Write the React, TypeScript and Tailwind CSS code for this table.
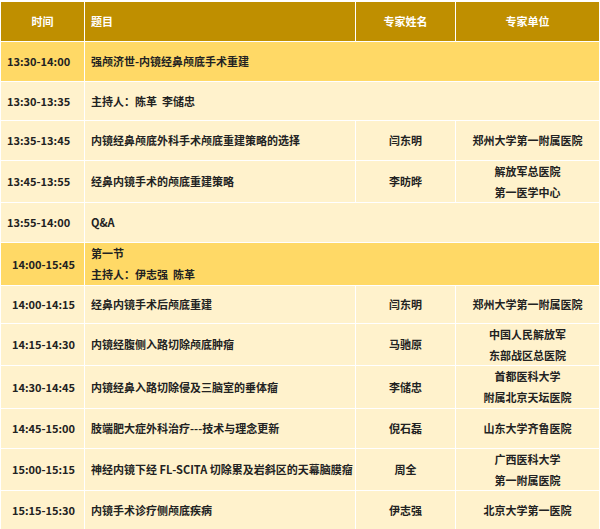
import React from "react";

type Row = {
  h: string;
  kind: "light" | "hl";
  time: string;
  timeAlign: "left" | "center";
  title: React.ReactNode;
  span?: boolean;
  name?: string;
  unit?: string[];
};

const rows: Row[] = [
  { h: "h-[39px]", kind: "hl", time: "13:30-14:00", timeAlign: "left", title: "强颅济世-内镜经鼻颅底手术重建", span: true },
  { h: "h-[38px]", kind: "light", time: "13:30-13:35", timeAlign: "left", title: "主持人：陈革  李储忠", span: true },
  { h: "h-[39px]", kind: "light", time: "13:35-13:45", timeAlign: "left", title: "内镜经鼻颅底外科手术颅底重建策略的选择", name: "闫东明", unit: ["郑州大学第一附属医院"] },
  { h: "h-[41px]", kind: "light", time: "13:45-13:55", timeAlign: "left", title: "经鼻内镜手术的颅底重建策略", name: "李昉晔", unit: ["解放军总医院", "第一医学中心"] },
  { h: "h-[39px]", kind: "light", time: "13:55-14:00", timeAlign: "left", title: "Q&A", span: true },
  {
    h: "h-[42px]",
    kind: "hl",
    time: "14:00-15:45",
    timeAlign: "center",
    title: (
      <div className="leading-[21px]">
        <div>第一节</div>
        <div className="whitespace-pre">主持人：伊志强  陈革</div>
      </div>
    ),
    span: true,
  },
  { h: "h-[37px]", kind: "light", time: "14:00-14:15", timeAlign: "center", title: "经鼻内镜手术后颅底重建", name: "闫东明", unit: ["郑州大学第一附属医院"] },
  { h: "h-[41px]", kind: "light", time: "14:15-14:30", timeAlign: "center", title: "内镜经腹侧入路切除颅底肿瘤", name: "马驰原", unit: ["中国人民解放军", "东部战区总医院"] },
  { h: "h-[42px]", kind: "light", time: "14:30-14:45", timeAlign: "center", title: "内镜经鼻入路切除侵及三脑室的垂体瘤", name: "李储忠", unit: ["首都医科大学", "附属北京天坛医院"] },
  { h: "h-[39px]", kind: "light", time: "14:45-15:00", timeAlign: "center", title: "肢端肥大症外科治疗---技术与理念更新", name: "倪石磊", unit: ["山东大学齐鲁医院"] },
  { h: "h-[41px]", kind: "light", time: "15:00-15:15", timeAlign: "center", title: "神经内镜下经 FL-SCITA 切除累及岩斜区的天幕脑膜瘤", name: "周全", unit: ["广西医科大学", "第一附属医院"] },
  { h: "h-[39px]", kind: "light", time: "15:15-15:30", timeAlign: "center", title: "内镜手术诊疗侧颅底疾病", name: "伊志强", unit: ["北京大学第一医院"] },
];

export default function App() {
  return (
    <div
      className="w-[600px] h-[529px] overflow-hidden bg-white pt-[2px] pl-px text-[11px] font-bold text-[#222222]"
      style={{ fontFamily: '"Noto Sans CJK SC", "Noto Sans", sans-serif' }}
    >
      <div className="w-[598px] flex flex-col gap-px">
        {/* header */}
        <div className="flex gap-px h-[39px] text-white">
          <div className="w-[83px] shrink-0 bg-[#BF8F00] flex items-center justify-center">时间</div>
          <div className="w-[270px] shrink-0 bg-[#BF8F00] flex items-center pl-[6px]">题目</div>
          <div className="w-[99px] shrink-0 bg-[#BF8F00] flex items-center justify-center">专家姓名</div>
          <div className="flex-1 bg-[#BF8F00] flex items-center justify-center">专家单位</div>
        </div>
        {rows.map((r, i) => {
          const bg = r.kind === "hl" ? "bg-[#FFD966]" : "bg-[#FFF2CC]";
          return (
            <div key={i} className={`flex gap-px ${r.h}`}>
              <div
                className={`w-[83px] shrink-0 ${bg} flex items-center ${
                  r.timeAlign === "left" ? "pl-[6px]" : "justify-center pl-[2px]"
                }`}
              >
                {r.time}
              </div>
              {r.span ? (
                <div className={`flex-1 ${bg} flex items-center pl-[6px] whitespace-pre`}>{r.title}</div>
              ) : (
                <>
                  <div className={`w-[270px] shrink-0 ${bg} flex items-center pl-[6px] whitespace-nowrap`}>
                    {r.title}
                  </div>
                  <div className={`w-[99px] shrink-0 ${bg} flex items-center justify-center`}>{r.name}</div>
                  <div className={`flex-1 ${bg} flex flex-col items-center justify-center leading-[21px]`}>
                    {r.unit?.map((u, j) => (
                      <div key={j}>{u}</div>
                    ))}
                  </div>
                </>
              )}
            </div>
          );
        })}
      </div>
    </div>
  );
}
